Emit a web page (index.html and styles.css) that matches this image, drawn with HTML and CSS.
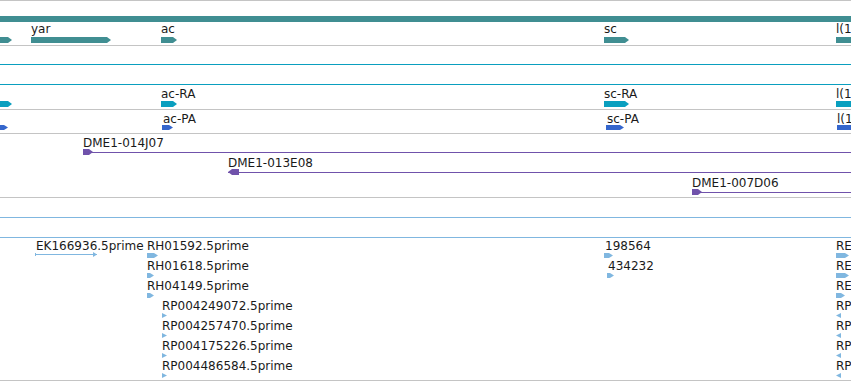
FILE: index.html
```html
<!DOCTYPE html>
<html>
<head>
<meta charset="utf-8">
<link rel="stylesheet" href="styles.css">
</head>
<body>
<div class="view">
  <div class="track t-genes">
    <div class="bar teal full" style="top:15px"></div>
    <span class="label" style="left:31px;top:21px">yar</span>
    <span class="label" style="left:161px;top:21px">ac</span>
    <span class="label" style="left:604px;top:21px">sc</span>
    <span class="label" style="left:836px;top:21px">l(1</span>
    <div class="bar teal arrow-r" style="left:-2px;top:36px;width:14px"></div>
    <div class="bar teal arrow-r" style="left:31px;top:36px;width:80px"></div>
    <div class="bar teal arrow-r" style="left:161px;top:36px;width:16px"></div>
    <div class="bar teal arrow-r" style="left:604px;top:36px;width:25px"></div>
    <div class="bar teal" style="left:836px;top:36px;width:20px"></div>
  </div>
  <div class="track t-tx">
    <div class="line cyan" style="top:18px"></div>
    <div class="line cyan" style="top:38px"></div>
    <span class="label" style="left:161px;top:41px">ac-RA</span>
    <span class="label" style="left:604px;top:41px">sc-RA</span>
    <span class="label" style="left:836px;top:41px">l(1</span>
    <div class="bar cyan arrow-r" style="left:-2px;top:55px;width:14px"></div>
    <div class="bar cyan arrow-r" style="left:161px;top:55px;width:16px"></div>
    <div class="bar cyan arrow-r" style="left:604px;top:55px;width:25px"></div>
    <div class="bar cyan" style="left:836px;top:55px;width:20px"></div>
  </div>
  <div class="track t-pp">
    <span class="label" style="left:163px;top:2px">ac-PA</span>
    <span class="label" style="left:607px;top:2px">sc-PA</span>
    <span class="label" style="left:837px;top:2px">l(1</span>
    <div class="bar blue thin arrow-r" style="left:-2px;top:15px;width:10px"></div>
    <div class="bar blue thin arrow-r" style="left:162px;top:15px;width:11px"></div>
    <div class="bar blue thin arrow-r" style="left:606px;top:15px;width:18px"></div>
    <div class="bar blue thin" style="left:837px;top:15px;width:20px"></div>
  </div>
  <div class="track t-clones">
    <span class="label" style="left:83px;top:2px">DME1-014J07</span>
    <div class="line purple" style="left:83px;top:18px"></div>
    <div class="bar purple arrow-r" style="left:83px;top:15px;width:10px"></div>
    <span class="label" style="left:228px;top:22px">DME1-013E08</span>
    <div class="line purple" style="left:228px;top:38px"></div>
    <div class="bar purple arrow-l" style="left:228px;top:35px;width:11px"></div>
    <span class="label" style="left:692px;top:42px">DME1-007D06</span>
    <div class="line purple" style="left:692px;top:58px"></div>
    <div class="bar purple arrow-r" style="left:692px;top:55px;width:10px"></div>
  </div>
  <div class="track t-est">
    <div class="line lblue" style="top:19px"></div>
    <div class="line lblue" style="top:39px"></div>

    <span class="label" style="left:36px;top:41px">EK166936.5prime</span>
    <div class="est-span" style="left:35px;top:55px;width:62px"></div>

    <span class="label" style="left:147px;top:41px">RH01592.5prime</span>
    <div class="bar lblue est arrow-r" style="left:147px;top:55px;width:11px"></div>
    <span class="label" style="left:147px;top:61px">RH01618.5prime</span>
    <div class="bar lblue est arrow-r" style="left:147px;top:75px;width:7px"></div>
    <span class="label" style="left:147px;top:81px">RH04149.5prime</span>
    <div class="bar lblue est arrow-r" style="left:147px;top:95px;width:7px"></div>
    <span class="label" style="left:162px;top:101px">RP004249072.5prime</span>
    <div class="bar lblue est tri-r" style="left:162px;top:115px;width:5px"></div>
    <span class="label" style="left:162px;top:121px">RP004257470.5prime</span>
    <div class="bar lblue est tri-r" style="left:162px;top:135px;width:5px"></div>
    <span class="label" style="left:162px;top:141px">RP004175226.5prime</span>
    <div class="bar lblue est tri-r" style="left:162px;top:155px;width:5px"></div>
    <span class="label" style="left:162px;top:161px">RP004486584.5prime</span>
    <div class="bar lblue est tri-r" style="left:162px;top:175px;width:5px"></div>

    <span class="label" style="left:605px;top:41px">198564</span>
    <div class="bar lblue est arrow-r" style="left:604px;top:55px;width:9px"></div>
    <span class="label" style="left:608px;top:61px">434232</span>
    <div class="bar lblue est arrow-r" style="left:607px;top:75px;width:7px"></div>

    <span class="label" style="left:836px;top:41px">RE</span>
    <div class="bar lblue est arrow-r" style="left:836px;top:55px;width:13px"></div>
    <span class="label" style="left:836px;top:61px">RE</span>
    <div class="bar lblue est arrow-r" style="left:836px;top:75px;width:13px"></div>
    <span class="label" style="left:836px;top:81px">RE</span>
    <div class="bar lblue est arrow-r" style="left:836px;top:95px;width:9px"></div>
    <span class="label" style="left:836px;top:101px">RP</span>
    <div class="bar lblue est tri-l" style="left:836px;top:115px;width:5px"></div>
    <span class="label" style="left:836px;top:121px">RP</span>
    <div class="bar lblue est tri-l" style="left:836px;top:135px;width:5px"></div>
    <span class="label" style="left:836px;top:141px">RP</span>
    <div class="bar lblue est tri-l" style="left:836px;top:155px;width:5px"></div>
    <span class="label" style="left:836px;top:161px">RP</span>
    <div class="bar lblue est tri-l" style="left:836px;top:175px;width:5px"></div>
  </div>
</div>
</body>
</html>
```

FILE: styles.css
```css
html, body {
  margin: 0;
  padding: 0;
  background: #ffffff;
}

.view {
  width: 851px;
  height: 381px;
  overflow: hidden;
  border-top: 1px solid #c4c4c4;
  box-sizing: border-box;
  display: flex;
  flex-direction: column;
  font-family: "DejaVu Sans", sans-serif;
  font-size: 12px;
  line-height: 14px;
  color: #1a1a1a;
}

.track {
  position: relative;
  flex: none;
  border-bottom: 1px solid #c4c4c4;
}

.t-genes { height: 44px; }
.t-tx { height: 63px; }
.t-pp { height: 23px; }
.t-clones { height: 63px; }
.t-est { height: 182px; }

.label {
  position: absolute;
  white-space: nowrap;
}

.bar {
  position: absolute;
  height: 6px;
}

.bar.thin { height: 5px; }
.bar.est { height: 5px; }

.full {
  left: 0;
  right: 0;
}

.line {
  position: absolute;
  left: 0;
  right: 0;
  height: 1px;
}

.teal { background: #408e92; }
.cyan { background: #0a9fbf; }
.blue { background: #3566cc; }
.purple { background: #7052ab; }
.lblue { background: #80b7e0; }

.arrow-r {
  clip-path: polygon(0 0, calc(100% - 4px) 0, 100% 50%, calc(100% - 4px) 100%, 0 100%);
}

.arrow-l {
  clip-path: polygon(4px 0, 100% 0, 100% 100%, 4px 100%, 0 50%);
}

.tri-r {
  clip-path: polygon(0 0, 100% 50%, 0 100%);
}

.tri-l {
  clip-path: polygon(100% 0, 0 50%, 100% 100%);
}

.est-span {
  position: absolute;
  height: 3px;
  border-left: 1px solid #80b7e0;
  box-sizing: border-box;
}

.est-span::before {
  content: "";
  position: absolute;
  left: 0;
  right: 0;
  top: 1px;
  height: 1px;
  background: #80b7e0;
}

.est-span::after {
  content: "";
  position: absolute;
  right: 0;
  top: -1px;
  width: 4px;
  height: 5px;
  background: #80b7e0;
  clip-path: polygon(0 0, 100% 50%, 0 100%);
}
```
